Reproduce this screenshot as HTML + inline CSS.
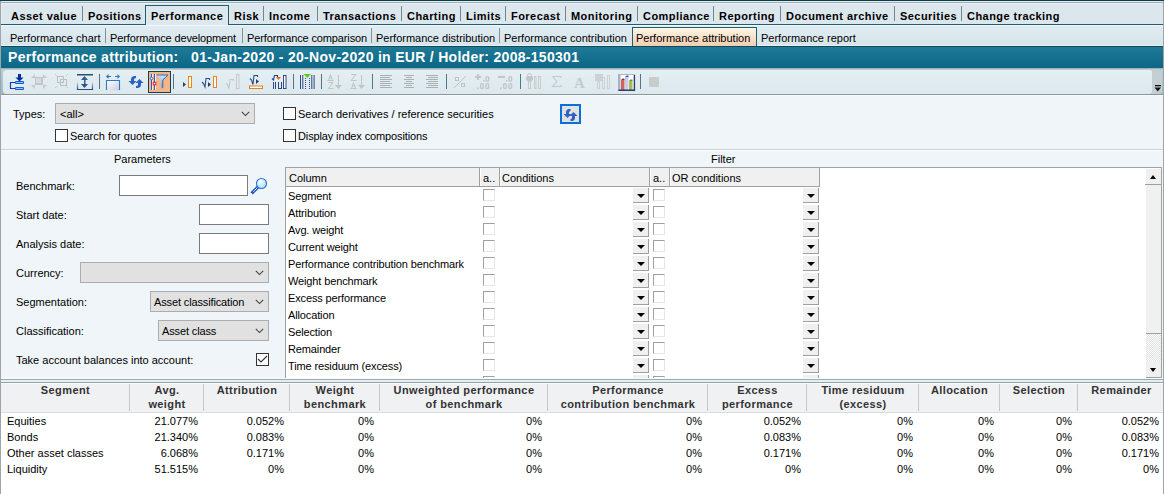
<!DOCTYPE html>
<html><head><meta charset="utf-8">
<style>
*{margin:0;padding:0;box-sizing:border-box}
html,body{width:1164px;height:494px;overflow:hidden;background:#eff5f9;font-family:"Liberation Sans",sans-serif;font-size:11px;color:#000}
.a{position:absolute}
.t{position:absolute;white-space:nowrap;line-height:13px;font-size:11px}
.g{letter-spacing:-0.13px}
.tb{position:absolute;white-space:nowrap;line-height:13px;font-size:11px;font-weight:bold;letter-spacing:0.45px}
.sep{position:absolute;width:1px;background:#71878f}
.ssep{position:absolute;width:1px;background:#7f9299}
.cb{position:absolute;width:13px;height:13px;border:1px solid #333;background:#fff}
.inp{position:absolute;border:1px solid #7a7a7a;background:#fff}
.combo{position:absolute;border:1px solid #adadad;background:#e1e1e1}
.chev{position:absolute;width:6px;height:6px;border-right:1px solid #444;border-bottom:1px solid #444;transform:rotate(45deg)}
.gcb{position:absolute;width:12px;height:12px;border-top:1px solid #a0a0a0;border-left:1px solid #a0a0a0;border-right:1px solid #e6e6e6;border-bottom:1px solid #e6e6e6;background:#fff}
.dd{position:absolute;width:16px;height:15px;background:#f0f0f0;border-right:1px solid #a0a0a0;border-bottom:1px solid #a0a0a0}
.dd:after{content:"";position:absolute;left:4px;top:6px;border-left:4px solid transparent;border-right:4px solid transparent;border-top:4px solid #000}
.hd{position:absolute;white-space:nowrap;font-weight:bold;font-size:11px;letter-spacing:0.4px;line-height:14px;text-align:center;color:#333}
.hdv{position:absolute;top:384px;width:1px;height:27px;background:#c6c6c6}
.r{position:absolute;white-space:nowrap;line-height:13px;font-size:11px;text-align:right}
</style></head><body>
<!-- top frame -->
<div class="a" style="left:0;top:0;width:1164px;height:1px;background:#0b3d4b"></div>
<div class="a" style="left:0;top:1px;width:1164px;height:1px;background:#dfe9ee"></div>
<div class="a" style="left:0;top:2px;width:1164px;height:1px;background:#a3abaf"></div>
<!-- main tab bar -->
<div class="a" style="left:1px;top:3px;width:1162px;height:21px;background:#dbe7ed"></div>
<div class="a" style="left:1px;top:3px;width:1162px;height:1px;background:#e8f2f6"></div>
<div class="a" style="left:0;top:24px;width:1164px;height:1px;background:#1f5d6f"></div>
<div class="a" style="left:0;top:25px;width:1164px;height:1px;background:#f2f7f9"></div>
<div class="a" style="left:145px;top:5px;width:84px;height:20px;border:1px solid #1f5d6f;border-bottom:none;background:#dce8ee"></div>

<div class="tb" style="left:11px;top:10px">Asset value</div>
<div class="sep" style="left:82px;top:6px;height:15px"></div>
<div class="tb" style="left:88px;top:10px">Positions</div>
<div class="tb" style="left:151px;top:10px">Performance</div>
<div class="tb" style="left:234px;top:10px">Risk</div>
<div class="sep" style="left:263px;top:6px;height:15px"></div>
<div class="tb" style="left:269px;top:10px">Income</div>
<div class="sep" style="left:317px;top:6px;height:15px"></div>
<div class="tb" style="left:323px;top:10px">Transactions</div>
<div class="sep" style="left:401px;top:6px;height:15px"></div>
<div class="tb" style="left:407px;top:10px">Charting</div>
<div class="sep" style="left:460px;top:6px;height:15px"></div>
<div class="tb" style="left:466px;top:10px">Limits</div>
<div class="sep" style="left:505px;top:6px;height:15px"></div>
<div class="tb" style="left:511px;top:10px">Forecast</div>
<div class="sep" style="left:565px;top:6px;height:15px"></div>
<div class="tb" style="left:571px;top:10px">Monitoring</div>
<div class="sep" style="left:637px;top:6px;height:15px"></div>
<div class="tb" style="left:643px;top:10px">Compliance</div>
<div class="sep" style="left:713px;top:6px;height:15px"></div>
<div class="tb" style="left:719px;top:10px">Reporting</div>
<div class="sep" style="left:780px;top:6px;height:15px"></div>
<div class="tb" style="left:786px;top:10px">Document archive</div>
<div class="sep" style="left:894px;top:6px;height:15px"></div>
<div class="tb" style="left:900px;top:10px">Securities</div>
<div class="sep" style="left:961px;top:6px;height:15px"></div>
<div class="tb" style="left:967px;top:10px">Change tracking</div>

<!-- sub tab bar -->
<div class="a" style="left:1px;top:26px;width:1162px;height:19px;background:linear-gradient(#e0ecf1,#d7e5eb)"></div>
<div class="a" style="left:1px;top:45px;width:1162px;height:1px;background:#e8f0f3"></div>
<div class="a" style="left:632px;top:27px;width:125px;height:19px;border:1px solid #1f5d6f;border-bottom:none;background:linear-gradient(#fdf6e6,#f3cdae)"></div>
<div class="t" style="left:10px;top:32px">Performance chart</div>
<div class="ssep" style="left:105px;top:28px;height:15px"></div>
<div class="t g" style="left:110px;top:32px">Performance development</div>
<div class="ssep" style="left:242px;top:28px;height:15px"></div>
<div class="t g" style="left:247px;top:32px">Performance comparison</div>
<div class="ssep" style="left:371px;top:28px;height:15px"></div>
<div class="t" style="left:376px;top:32px">Performance distribution</div>
<div class="ssep" style="left:499px;top:28px;height:15px"></div>
<div class="t" style="left:504px;top:32px">Performance contribution</div>
<div class="t" style="left:636px;top:32px">Performance attribution</div>
<div class="t" style="left:761px;top:32px">Performance report</div>

<!-- title bar -->
<div class="a" style="left:0;top:46px;width:1164px;height:22px;background:linear-gradient(#207b98,#0b6786)"></div>
<div class="a" style="left:0;top:46px;width:1164px;height:1px;background:#0e4a5d"></div>
<div class="a" style="left:8px;top:49px;white-space:nowrap;color:#fff;font-weight:bold;font-size:14px;line-height:17px;letter-spacing:0.3px">Performance attribution:&nbsp;&nbsp; 01-Jan-2020 - 20-Nov-2020 in EUR / Holder: 2008-150301</div>
<div class="a" style="left:0;top:68px;width:1164px;height:1px;background:#a6aeb2"></div>

<!-- toolbar -->
<div class="a" style="left:1px;top:69px;width:1162px;height:25px;background:linear-gradient(#b4d0d8,#9fbcc5)"></div>
<div class="a" style="left:3px;top:70px;width:1150px;height:24px;border-radius:4px;background:linear-gradient(#e5eff3,#dbe8ed)"></div>
<div class="a" style="left:1152px;top:70px;width:10px;height:24px;border-radius:0 4px 4px 0;background:#c4cfd3"></div>
<div class="a" style="left:0;top:94px;width:1164px;height:1px;background:#8e969a"></div>
<svg class="a" style="left:0;top:0" width="1164" height="100" viewBox="0 0 1164 100">
<g shape-rendering="crispEdges">
<!-- separators -->
<g fill="#4f7686">
<rect x="99" y="74" width="1" height="15"/><rect x="173" y="74" width="1" height="15"/>
<rect x="293" y="74" width="1" height="15"/><rect x="321" y="74" width="1" height="15"/>
<rect x="372" y="74" width="1" height="15"/><rect x="446" y="74" width="1" height="15"/>
<rect x="520" y="74" width="1" height="15"/><rect x="640" y="74" width="1" height="15"/>
</g>
</g>
<!-- icon1 tree download -->
<g>
<rect x="18" y="74" width="3" height="4" fill="#0a2d9c"/>
<polygon points="15.5,77.5 23.5,77.5 19.5,81.5" fill="#0a2d9c"/>
<path d="M11,82.5 H16 M10.5,82 V89 M11,88.5 H16" stroke="#0d3fc0" stroke-width="1.2" fill="none"/>
<rect x="15" y="81" width="9" height="3" rx="1" fill="#1a5fd0"/>
<rect x="16" y="82" width="7" height="1" fill="#8ec0f0"/>
<rect x="15" y="87" width="9" height="3" rx="1" fill="#1a5fd0"/>
<rect x="16" y="88" width="7" height="1" fill="#8ec0f0"/>
</g>
<!-- icon2 expand gray -->
<g fill="#c5c9cb">
<polygon points="31,78 35,74 35,78"/><polygon points="43,74 47,78 43,78"/>
<polygon points="31,85 35,85 35,89"/><polygon points="43,85 47,85 43,89"/>
<rect x="35" y="77" width="8" height="8" fill="#c2c6c8"/>
<rect x="36" y="78" width="5" height="5" fill="#d8dcde"/>
</g>
<!-- icon3 overlapping squares gray -->
<g fill="none" stroke="#bcc0c2" stroke-width="1">
<rect x="57.5" y="76.5" width="6" height="6"/><rect x="60.5" y="79.5" width="6" height="6"/>
<path d="M55,74 L57,76 M68,74 L66,76 M55,88 L57,86 M68,88 L66,86" stroke="#c8ccce"/>
</g>
<!-- icon4 height -->
<g>
<rect x="77" y="74" width="16" height="1.5" fill="#2a4d78"/>
<path d="M77.5,82 V89.5 H92.5 V82" fill="none" stroke="url(#gbr)" stroke-width="1.2"/>
<polygon points="81,80 88,80 84.5,76" fill="#2d5f8f"/>
<rect x="84" y="80" width="1.5" height="5" fill="#2d5f8f"/>
<polygon points="81,84 88,84 84.5,88" fill="#2a5584"/>
</g>
<defs>
<linearGradient id="gbr" x1="0" y1="0" x2="0" y2="1"><stop offset="0" stop-color="#cfe0f5"/><stop offset="1" stop-color="#2a4a78"/></linearGradient>
<linearGradient id="gbox" x1="0" y1="0" x2="1" y2="1"><stop offset="0" stop-color="#ffffff"/><stop offset="1" stop-color="#c9cbe0"/></linearGradient>
<linearGradient id="gfun" x1="0" y1="0" x2="0" y2="1"><stop offset="0" stop-color="#cfe4fa"/><stop offset="1" stop-color="#6aaee8"/></linearGradient>
</defs>
<!-- icon5 width box -->
<g>
<rect x="106.5" y="80.5" width="13" height="10" fill="url(#gbox)"/>
<path d="M106.5,90 V80.5 H119.5 V90" fill="none" stroke="#2a7ac8" stroke-width="1.1"/>
<path d="M107,76.5 H111 M115,76.5 H119" stroke="#2a78c0" stroke-width="1.1"/>
<polygon points="106,76.5 108.5,74 108.5,79" fill="#2a70c0"/>
<polygon points="120,76.5 117.5,74 117.5,79" fill="#2a80c8"/>
</g>
<!-- icon6 swap arrows -->
<g fill="#2a62c8">
<path d="M136,76 H134 Q131,76.5 131,79.5 V81 H128.5 L132.5,85 L136.5,81 H134 V79.5 Q134,78 136,78 Z"/>
<path d="M136,88 H138 Q141,87.5 141,84.5 V83 H143.5 L139.5,79 L135.5,83 H138 V84.5 Q138,86 136,86 Z"/>
</g>
<!-- icon7 selected filter -->
<g>
<rect x="148.5" y="71.5" width="22" height="21" fill="#f2b58b" stroke="#183f4c" stroke-width="1"/>
<g shape-rendering="crispEdges">
<rect x="151" y="74" width="1" height="16" fill="#2a5ad0"/>
<rect x="152" y="74" width="1" height="16" fill="#fbeee4"/>
<rect x="154" y="74" width="1" height="16" fill="#2a5ad0"/>
<rect x="155" y="74" width="1" height="16" fill="#fbeee4"/>
</g>
<circle cx="151.5" cy="78.5" r="1.3" fill="#fff" stroke="#2a5ad0" stroke-width="0.9"/>
<rect x="153.2" y="82.2" width="2.6" height="2.6" fill="#fff" stroke="#f01818" stroke-width="1"/>
<polygon points="156.5,75 168,75 162.8,80 162.8,87.5 160.8,87.5 160.8,80" fill="url(#gfun)"/>
<path d="M156.5,75 H168 L162.8,80 V87.5 L161.8,88" fill="none" stroke="#2b5f9e" stroke-width="0.9"/>
</g>
<!-- icon8 -->
<g>
<polygon points="183,82 186,84.5 183,87" fill="#27406e"/>
<rect x="188.5" y="76.5" width="3" height="11" fill="#fff" stroke="#ee8418" stroke-width="1"/>
</g>
<!-- icon9 -->
<g>
<path d="M202,82 L203.5,83.5 L205,87 L206,78.5 H209.5 V80" fill="none" stroke="#24508a" stroke-width="1.1"/>
<polygon points="208,82 211,84.5 208,87" fill="#27406e"/>
<rect x="213.5" y="76.5" width="3" height="11" fill="#fff" stroke="#ee8418" stroke-width="1"/>
</g>
<!-- icon10 gray -->
<g>
<path d="M226,83 L227.5,84.5 L229,88.5 L230,79.5 H233.5 V81" fill="none" stroke="#c5c9cb" stroke-width="1.1"/>
<rect x="236.5" y="74.5" width="2.5" height="14" fill="#e8eced" stroke="#c5c9cb" stroke-width="1"/>
</g>
<!-- icon11 -->
<g>
<path d="M250,78.5 L251.5,80 L253,84.5 L254,75.5 H257.5 V77" fill="none" stroke="#24508a" stroke-width="1.1"/>
<polygon points="256,79 259,81.5 256,84" fill="#27406e"/>
<rect x="249.5" y="86" width="13" height="2.5" fill="#fff" stroke="#e6801a" stroke-width="1"/>
</g>
<!-- icon12 -->
<g>
<rect x="275" y="73" width="8" height="8" fill="#e9edf4"/>
<path d="M272,78.5 L273.5,80 L274.5,75.5 H277.5 V77" fill="none" stroke="#1a3a9e" stroke-width="1.1"/>
<polygon points="276,77 281,77 278.5,80" fill="#e07018"/>
<g fill="#2d4a80" shape-rendering="crispEdges"><rect x="273" y="82" width="1" height="7"/><rect x="275" y="82" width="1" height="7"/><rect x="278" y="82" width="1" height="7"/><rect x="281" y="82" width="1" height="7"/><rect x="278" y="88" width="4" height="1"/></g>
<rect x="283.5" y="75.5" width="2.5" height="13" fill="#fff" stroke="#2d4a80" stroke-width="1"/>
</g>
<!-- icon13 -->
<g>
<g fill="#2d4a80"><rect x="300" y="75" width="1" height="14"/><rect x="302.3" y="75" width="1" height="14"/><rect x="311.3" y="75" width="1" height="14"/><rect x="313.6" y="75" width="1" height="14"/></g>
<g fill="#2d4a80"><rect x="305" y="78" width="1" height="1"/><rect x="305" y="80" width="1" height="1"/><rect x="305" y="82" width="1" height="1"/><rect x="305" y="84" width="1" height="1"/><rect x="305" y="86" width="1" height="1"/><rect x="305" y="88" width="1" height="1"/>
<rect x="309" y="78" width="1" height="1"/><rect x="309" y="80" width="1" height="1"/><rect x="309" y="82" width="1" height="1"/><rect x="309" y="84" width="1" height="1"/><rect x="309" y="86" width="1" height="1"/><rect x="309" y="88" width="1" height="1"/></g>
<polygon points="303.5,74 311,74 307.3,78" fill="#5ccc1a"/>
</g>
<!-- icon14/15 sort -->
<g fill="none" stroke="#c0c4c6" stroke-width="1">
<path d="M327.5,80.5 H333.5 M328.5,80.5 L330.5,74.5 L332.5,80.5 M329.2,78 H331.8"/>
<path d="M328.5,82.5 H333 L328.5,88.5 H333.5"/>
<path d="M338.5,75 V85"/>
<path d="M351,74.5 H356 L351,80.5 H356.5"/>
<path d="M350.5,88.5 H356.5 M351.5,88.5 L353.5,82.5 L355.5,88.5 M352.2,86 H354.8"/>
<path d="M361.5,75 V85"/>
</g>
<g fill="#c0c4c6"><polygon points="335,85 342,85 338.5,89"/><polygon points="358,85 365,85 361.5,89"/></g>
<!-- align -->
<g fill="#a9afb3" shape-rendering="crispEdges">
<rect x="380" y="75" width="12" height="1"/><rect x="380" y="77" width="10" height="1"/><rect x="380" y="79" width="12" height="1"/><rect x="380" y="81" width="10" height="1"/><rect x="380" y="83" width="12" height="1"/><rect x="380" y="85" width="10" height="1"/><rect x="380" y="87" width="12" height="1"/>
<rect x="404" y="75" width="10" height="1"/><rect x="406" y="77" width="6" height="1"/><rect x="404" y="79" width="10" height="1"/><rect x="406" y="81" width="6" height="1"/><rect x="404" y="83" width="10" height="1"/><rect x="406" y="85" width="6" height="1"/><rect x="404" y="87" width="10" height="1"/>
<rect x="426" y="75" width="12" height="1"/><rect x="428" y="77" width="10" height="1"/><rect x="426" y="79" width="12" height="1"/><rect x="428" y="81" width="10" height="1"/><rect x="426" y="83" width="12" height="1"/><rect x="428" y="85" width="10" height="1"/><rect x="426" y="87" width="12" height="1"/>
</g>
<!-- percent -->
<g fill="none" stroke="#bfc3c5" stroke-width="1">
<rect x="455.5" y="77.5" width="3" height="3"/><rect x="461.5" y="83.5" width="3" height="3"/>
<path d="M454,88 L466,76"/>
</g>
<!-- +.0 .00 -->
<g fill="#c2c6c8">
<rect x="474.5" y="73.5" width="9" height="8" fill="#e6eaec"/>
<path d="M477,74 h2 v2 h2 v2 h-2 v2 h-2 v-2 h-2 v-2 h2 z" fill="#c2c6c8"/>
</g>
<g fill="none" stroke="#c2c6c8" stroke-width="1.3">
<rect x="486" y="76.6" width="2.6" height="4.6" rx="1"/>
<rect x="480.6" y="83.6" width="2.6" height="4.8" rx="1"/><rect x="486" y="83.6" width="2.6" height="4.8" rx="1"/>
<rect x="509" y="76.6" width="2.6" height="4.6" rx="1"/>
<rect x="503.6" y="83.6" width="2.6" height="4.8" rx="1"/><rect x="509" y="83.6" width="2.6" height="4.8" rx="1"/>
</g>
<g fill="#c2c6c8"><rect x="483" y="80" width="1.5" height="1.5"/><rect x="477" y="87.5" width="1.5" height="1.5"/><rect x="506" y="80" width="1.5" height="1.5"/><rect x="500" y="87.5" width="1.5" height="1.5"/></g>
<rect x="497.5" y="73.5" width="8" height="8" fill="#e6eaec"/>
<rect x="498" y="76" width="7" height="2" fill="#c2c6c8"/>
<!-- lock bars -->
<g fill="#c3c7c9">
<rect x="526" y="76" width="7" height="5" rx="2"/>
<rect x="527.5" y="73.5" width="4" height="4" rx="2" fill="none" stroke="#c3c7c9"/>
</g>
<g fill="none" stroke="#c8cccd" stroke-width="1">
<rect x="528.5" y="81.5" width="2" height="7"/><rect x="534.5" y="76.5" width="1.5" height="12"/><rect x="538.5" y="76.5" width="2" height="12"/>
</g>
<!-- sigma -->
<path d="M552.5,76.5 H561 V78 M552.5,76.5 L557,81.5 L552.5,86.5 H561 V85" fill="none" stroke="#c3c7c9" stroke-width="1.1"/>
<!-- A serif -->
<text x="574" y="88" font-family="Liberation Serif" font-weight="bold" font-size="15" fill="#c6cacc">A</text>
<!-- icon25 gray bars -->
<g>
<rect x="595" y="74" width="8" height="7" fill="#cdd2d4"/>
<g fill="none" stroke="#cdd1d3" stroke-width="1"><rect x="597.5" y="81.5" width="2" height="7"/><rect x="602.5" y="77.5" width="2" height="11"/><rect x="607.5" y="75.5" width="2" height="13"/></g>
</g>
<!-- chart icon -->
<g>
<rect x="618" y="74" width="17" height="17" fill="#fff"/>
<rect x="618" y="74" width="2.5" height="17" fill="#a2b2c8"/>
<rect x="618" y="74" width="17" height="1" fill="#a8b6ca"/>
<rect x="621" y="80" width="3.5" height="10" fill="#d9605a"/><polygon points="621,80 622.5,78.5 624.5,78.5 624.5,80" fill="#a82a22"/>
<rect x="625" y="77" width="3.5" height="13" fill="#c4cfee"/><polygon points="625,77 626.5,75.5 628.5,75.5 628.5,77" fill="#3452c0"/>
<rect x="629" y="81" width="3.5" height="9" fill="#a8bc50"/><polygon points="629,81 630.5,79.5 632.5,79.5 632.5,81" fill="#6a8a22"/>
<path d="M618.5,90.3 H634.4 V75" fill="none" stroke="#243e74" stroke-width="1.4"/>
</g>
<!-- gray square -->
<rect x="649" y="77" width="10" height="10" rx="1" fill="#c8cccd"/>
<!-- overflow chevron -->
<rect x="1155" y="85" width="6" height="1.3" fill="#111"/>
<polygon points="1154.5,87.5 1161,87.5 1157.8,91.5" fill="#111"/>
</svg>



<!-- search panel -->
<div class="a" style="left:1px;top:95px;width:1162px;height:1px;background:#f8fbfc"></div>
<div class="t" style="left:13px;top:108px">Types:</div>
<div class="combo" style="left:55px;top:103px;width:200px;height:21px"></div>
<div class="t" style="left:60px;top:108px">&lt;all&gt;</div>
<svg class="a" style="left:241px;top:111px" width="9" height="6"><path d="M0.8,0.8 L4.5,4.5 L8.2,0.8" fill="none" stroke="#404040" stroke-width="1.05"/></svg>
<div class="cb" style="left:55px;top:129px"></div>
<div class="t" style="left:70px;top:130px">Search for quotes</div>
<div class="cb" style="left:283px;top:107px"></div>
<div class="t" style="left:298px;top:108px">Search derivatives / reference securities</div>
<div class="cb" style="left:283px;top:129px"></div>
<div class="t g" style="left:298px;top:130px">Display index compositions</div>
<div class="a" style="left:560px;top:104px;width:21px;height:20px;border:2px solid #0a70d8;background:#e1e1e1"></div>
<svg class="a" style="left:560px;top:104px" width="21" height="20" viewBox="0 0 21 20">
<g fill="#2a62c8">
<path d="M10.5,5 H8.5 Q6,5.5 6,8.5 V10 H3.5 L7.5,14 L11.5,10 H9 V8.5 Q9,7 10.5,7 Z"/>
<path d="M10.5,17 H12.5 Q15,16.5 15,13.5 V12 H17.5 L13.5,8 L9.5,12 H12 V13.5 Q12,15 10.5,15 Z"/>
</g></svg>
<div class="a" style="left:1px;top:149px;width:1162px;height:1px;background:#cdd4d8"></div>
<div class="a" style="left:1px;top:150px;width:1162px;height:1px;background:#fafcfd"></div>

<!-- parameters -->
<div class="t" style="left:114px;top:153px">Parameters</div>
<div class="t" style="left:711px;top:153px">Filter</div>
<div class="t" style="left:16px;top:180px">Benchmark:</div>
<div class="t" style="left:16px;top:209px">Start date:</div>
<div class="t" style="left:16px;top:238px">Analysis date:</div>
<div class="t" style="left:16px;top:267px">Currency:</div>
<div class="t" style="left:16px;top:296px">Segmentation:</div>
<div class="t" style="left:16px;top:325px">Classification:</div>
<div class="t" style="left:16px;top:354px">Take account balances into account:</div>
<div class="inp" style="left:119px;top:175px;width:129px;height:21px"></div>
<div class="inp" style="left:199px;top:204px;width:70px;height:21px"></div>
<div class="inp" style="left:199px;top:233px;width:70px;height:21px"></div>
<div class="combo" style="left:80px;top:262px;width:189px;height:21px"></div>
<svg class="a" style="left:255px;top:270px" width="9" height="6"><path d="M0.8,0.8 L4.5,4.5 L8.2,0.8" fill="none" stroke="#404040" stroke-width="1.05"/></svg>
<div class="combo" style="left:150px;top:291px;width:119px;height:21px"></div>
<div class="t g" style="left:154px;top:296px">Asset classification</div>
<svg class="a" style="left:255px;top:299px" width="9" height="6"><path d="M0.8,0.8 L4.5,4.5 L8.2,0.8" fill="none" stroke="#404040" stroke-width="1.05"/></svg>
<div class="combo" style="left:158px;top:320px;width:111px;height:21px"></div>
<div class="t g" style="left:162px;top:325px">Asset class</div>
<svg class="a" style="left:255px;top:328px" width="9" height="6"><path d="M0.8,0.8 L4.5,4.5 L8.2,0.8" fill="none" stroke="#404040" stroke-width="1.05"/></svg>
<div class="cb" style="left:256px;top:353px"></div>
<svg class="a" style="left:256px;top:353px" width="13" height="13"><path d="M2,6 L5,9 L11,3" fill="none" stroke="#333" stroke-width="1.1"/></svg>
<svg class="a" style="left:250px;top:176px" width="19" height="19" viewBox="0 0 19 19">
<defs><radialGradient id="mg" cx="0.35" cy="0.3" r="0.8"><stop offset="0" stop-color="#ffffff"/><stop offset="0.5" stop-color="#c6efff"/><stop offset="1" stop-color="#a8dcf6"/></radialGradient></defs>
<path d="M2.8,16.2 L8,11" stroke="#1f55c0" stroke-width="3.2" stroke-linecap="square"/>
<path d="M3.3,15.7 L7.5,11.5" stroke="#f4f8ff" stroke-width="0.9"/>
<circle cx="11.5" cy="7.5" r="5" fill="url(#mg)" stroke="#2f6cd0" stroke-width="1.1"/>
</svg>

<!-- filter grid -->
<div class="a" style="left:285px;top:167px;width:877px;height:211px;background:#fff;border-left:1px solid #a0a0a0;border-top:1px solid #a0a0a0;border-right:1px solid #a0a0a0;overflow:hidden">
<div class="a" style="left:0;top:0;width:534px;height:18px;background:#f0f0f0"></div>
<div class="a" style="left:0;top:18px;width:534px;height:1px;background:#a0a0a0"></div>
<div class="a" style="left:193px;top:0;width:1px;height:18px;background:#a0a0a0"></div>
<div class="a" style="left:194px;top:0;width:1px;height:18px;background:#fff"></div>
<div class="a" style="left:213px;top:0;width:1px;height:18px;background:#a0a0a0"></div>
<div class="a" style="left:214px;top:0;width:1px;height:18px;background:#fff"></div>
<div class="a" style="left:363px;top:0;width:1px;height:18px;background:#a0a0a0"></div>
<div class="a" style="left:364px;top:0;width:1px;height:18px;background:#fff"></div>
<div class="a" style="left:383px;top:0;width:1px;height:18px;background:#a0a0a0"></div>
<div class="a" style="left:384px;top:0;width:1px;height:18px;background:#fff"></div>
<div class="a" style="left:533px;top:0;width:1px;height:18px;background:#a0a0a0"></div>
<div class="t" style="left:3px;top:4px">Column</div>
<div class="t" style="left:197px;top:4px">a..</div>
<div class="t" style="left:216px;top:4px">Conditions</div>
<div class="t" style="left:367px;top:4px">a..</div>
<div class="t" style="left:386px;top:4px">OR conditions</div>
<div class="t g" style="left:2px;top:22px">Segment</div>
<div class="gcb" style="left:197px;top:21px"></div>
<div class="gcb" style="left:367px;top:21px"></div>
<div class="dd" style="left:347px;top:20px"></div>
<div class="dd" style="left:517px;top:20px"></div>
<div class="t g" style="left:2px;top:39px">Attribution</div>
<div class="gcb" style="left:197px;top:38px"></div>
<div class="gcb" style="left:367px;top:38px"></div>
<div class="dd" style="left:347px;top:37px"></div>
<div class="dd" style="left:517px;top:37px"></div>
<div class="t g" style="left:2px;top:56px">Avg. weight</div>
<div class="gcb" style="left:197px;top:55px"></div>
<div class="gcb" style="left:367px;top:55px"></div>
<div class="dd" style="left:347px;top:54px"></div>
<div class="dd" style="left:517px;top:54px"></div>
<div class="t g" style="left:2px;top:73px">Current weight</div>
<div class="gcb" style="left:197px;top:72px"></div>
<div class="gcb" style="left:367px;top:72px"></div>
<div class="dd" style="left:347px;top:71px"></div>
<div class="dd" style="left:517px;top:71px"></div>
<div class="t g" style="left:2px;top:90px">Performance contribution benchmark</div>
<div class="gcb" style="left:197px;top:89px"></div>
<div class="gcb" style="left:367px;top:89px"></div>
<div class="dd" style="left:347px;top:88px"></div>
<div class="dd" style="left:517px;top:88px"></div>
<div class="t g" style="left:2px;top:107px">Weight benchmark</div>
<div class="gcb" style="left:197px;top:106px"></div>
<div class="gcb" style="left:367px;top:106px"></div>
<div class="dd" style="left:347px;top:105px"></div>
<div class="dd" style="left:517px;top:105px"></div>
<div class="t g" style="left:2px;top:124px">Excess performance</div>
<div class="gcb" style="left:197px;top:123px"></div>
<div class="gcb" style="left:367px;top:123px"></div>
<div class="dd" style="left:347px;top:122px"></div>
<div class="dd" style="left:517px;top:122px"></div>
<div class="t g" style="left:2px;top:141px">Allocation</div>
<div class="gcb" style="left:197px;top:140px"></div>
<div class="gcb" style="left:367px;top:140px"></div>
<div class="dd" style="left:347px;top:139px"></div>
<div class="dd" style="left:517px;top:139px"></div>
<div class="t g" style="left:2px;top:158px">Selection</div>
<div class="gcb" style="left:197px;top:157px"></div>
<div class="gcb" style="left:367px;top:157px"></div>
<div class="dd" style="left:347px;top:156px"></div>
<div class="dd" style="left:517px;top:156px"></div>
<div class="t g" style="left:2px;top:175px">Remainder</div>
<div class="gcb" style="left:197px;top:174px"></div>
<div class="gcb" style="left:367px;top:174px"></div>
<div class="dd" style="left:347px;top:173px"></div>
<div class="dd" style="left:517px;top:173px"></div>
<div class="t g" style="left:2px;top:192px">Time residuum (excess)</div>
<div class="gcb" style="left:197px;top:191px"></div>
<div class="gcb" style="left:367px;top:191px"></div>
<div class="dd" style="left:347px;top:190px"></div>
<div class="dd" style="left:517px;top:190px"></div>
<div class="gcb" style="left:197px;top:208px"></div>
<div class="gcb" style="left:367px;top:208px"></div>
<div class="dd" style="left:347px;top:207px"></div>
<div class="dd" style="left:517px;top:207px"></div>
<div class="a" style="left:860px;top:1px;width:15px;height:209px;background:#f0f0f0"></div>
<div class="a" style="left:860px;top:166px;width:15px;height:27px;background-image:repeating-conic-gradient(#e2e2e2 0 25%,#fbfbfb 0 50%);background-size:2px 2px"></div>
<div class="a" style="left:859px;top:16px;width:16px;height:1px;background:#a0a0a0"></div>
<div class="a" style="left:864px;top:7px;border-left:3.5px solid transparent;border-right:3.5px solid transparent;border-bottom:4px solid #000"></div>
<div class="a" style="left:860px;top:165px;width:15px;height:1px;background:#a0a0a0"></div>
<div class="a" style="left:860px;top:193px;width:15px;height:17px;background:#f0f0f0;border-bottom:1px solid #a0a0a0"></div>
<div class="a" style="left:864px;top:200px;border-left:3.5px solid transparent;border-right:3.5px solid transparent;border-top:4px solid #000"></div>
</div>
<div class="a" style="left:1px;top:378px;width:1162px;height:1px;background:#fbfcfd"></div>
<div class="a" style="left:0;top:379px;width:1164px;height:1px;background:#9fa9ad"></div>
<div class="a" style="left:0;top:380px;width:1164px;height:2px;background:#e2eff4"></div>
<div class="a" style="left:0;top:382px;width:1164px;height:1px;background:#97a3a7"></div>
<div class="a" style="left:1px;top:383px;width:1162px;height:30px;background:#f0f1f3"></div>
<div class="a" style="left:1px;top:383px;width:1162px;height:1px;background:#f9f9fa"></div>
<div class="a" style="left:1px;top:412px;width:1162px;height:1px;background:#dcdcdc"></div>
<div class="a" style="left:1px;top:413px;width:1162px;height:81px;background:#fff"></div>
<div class="hdv" style="left:129px"></div>
<div class="hdv" style="left:203px"></div>
<div class="hdv" style="left:289px"></div>
<div class="hdv" style="left:379px"></div>
<div class="hdv" style="left:547px"></div>
<div class="hdv" style="left:707px"></div>
<div class="hdv" style="left:806px"></div>
<div class="hdv" style="left:918px"></div>
<div class="hdv" style="left:999px"></div>
<div class="hdv" style="left:1077px"></div>
<div class="hd" style="left:1px;top:383px;width:129px">Segment</div>
<div class="hd" style="left:130px;top:383px;width:74px">Avg.<br>weight</div>
<div class="hd" style="left:204px;top:383px;width:86px">Attribution</div>
<div class="hd" style="left:290px;top:383px;width:90px">Weight<br>benchmark</div>
<div class="hd" style="left:380px;top:383px;width:168px">Unweighted performance<br>of benchmark</div>
<div class="hd" style="left:548px;top:383px;width:160px">Performance<br>contribution benchmark</div>
<div class="hd" style="left:708px;top:383px;width:99px">Excess<br>performance</div>
<div class="hd" style="left:807px;top:383px;width:112px">Time residuum<br>(excess)</div>
<div class="hd" style="left:919px;top:383px;width:81px">Allocation</div>
<div class="hd" style="left:1000px;top:383px;width:78px">Selection</div>
<div class="hd" style="left:1078px;top:383px;width:87px">Remainder</div>
<div class="t" style="left:7px;top:415px">Equities</div>
<div class="r" style="left:129px;top:415px;width:69px">21.077%</div>
<div class="r" style="left:203px;top:415px;width:81px">0.052%</div>
<div class="r" style="left:289px;top:415px;width:85px">0%</div>
<div class="r" style="left:379px;top:415px;width:163px">0%</div>
<div class="r" style="left:547px;top:415px;width:155px">0%</div>
<div class="r" style="left:707px;top:415px;width:94px">0.052%</div>
<div class="r" style="left:806px;top:415px;width:107px">0%</div>
<div class="r" style="left:918px;top:415px;width:76px">0%</div>
<div class="r" style="left:999px;top:415px;width:73px">0%</div>
<div class="r" style="left:1077px;top:415px;width:82px">0.052%</div>
<div class="t" style="left:7px;top:431px">Bonds</div>
<div class="r" style="left:129px;top:431px;width:69px">21.340%</div>
<div class="r" style="left:203px;top:431px;width:81px">0.083%</div>
<div class="r" style="left:289px;top:431px;width:85px">0%</div>
<div class="r" style="left:379px;top:431px;width:163px">0%</div>
<div class="r" style="left:547px;top:431px;width:155px">0%</div>
<div class="r" style="left:707px;top:431px;width:94px">0.083%</div>
<div class="r" style="left:806px;top:431px;width:107px">0%</div>
<div class="r" style="left:918px;top:431px;width:76px">0%</div>
<div class="r" style="left:999px;top:431px;width:73px">0%</div>
<div class="r" style="left:1077px;top:431px;width:82px">0.083%</div>
<div class="t" style="left:7px;top:447px">Other asset classes</div>
<div class="r" style="left:129px;top:447px;width:69px">6.068%</div>
<div class="r" style="left:203px;top:447px;width:81px">0.171%</div>
<div class="r" style="left:289px;top:447px;width:85px">0%</div>
<div class="r" style="left:379px;top:447px;width:163px">0%</div>
<div class="r" style="left:547px;top:447px;width:155px">0%</div>
<div class="r" style="left:707px;top:447px;width:94px">0.171%</div>
<div class="r" style="left:806px;top:447px;width:107px">0%</div>
<div class="r" style="left:918px;top:447px;width:76px">0%</div>
<div class="r" style="left:999px;top:447px;width:73px">0%</div>
<div class="r" style="left:1077px;top:447px;width:82px">0.171%</div>
<div class="t" style="left:7px;top:463px">Liquidity</div>
<div class="r" style="left:129px;top:463px;width:69px">51.515%</div>
<div class="r" style="left:203px;top:463px;width:81px">0%</div>
<div class="r" style="left:289px;top:463px;width:85px">0%</div>
<div class="r" style="left:379px;top:463px;width:163px">0%</div>
<div class="r" style="left:547px;top:463px;width:155px">0%</div>
<div class="r" style="left:707px;top:463px;width:94px">0%</div>
<div class="r" style="left:806px;top:463px;width:107px">0%</div>
<div class="r" style="left:918px;top:463px;width:76px">0%</div>
<div class="r" style="left:999px;top:463px;width:73px">0%</div>
<div class="r" style="left:1077px;top:463px;width:82px">0%</div>
<!-- left/right frame -->
<div class="a" style="left:0;top:1px;width:1px;height:493px;background:#9ea6aa"></div>
<div class="a" style="left:1163px;top:1px;width:1px;height:493px;background:#9ea6aa"></div>
<div class="a" style="left:1px;top:3px;width:1px;height:21px;background:#e6f0f4"></div>

</body></html>
